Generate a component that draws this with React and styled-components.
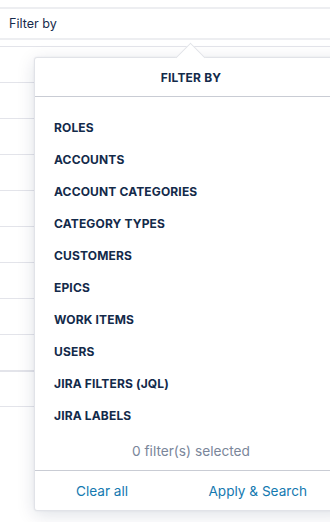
import React from "react";
import styled, { createGlobalStyle } from "styled-components";

const GlobalStyle = createGlobalStyle`
  html, body {
    margin: 0;
    padding: 0;
    background: #fff;
    font-family: Inter, "Noto Sans", "Liberation Sans", sans-serif;
    color: #172b4d;
  }
`;

const Page = styled.div`
  position: relative;
  width: 330px;
  height: 522px;
  overflow: hidden;
`;

const TopStrip = styled.div`
  height: 7px;
  border-bottom: 2px solid #edeef1;
`;

const FilterBar = styled.div`
  height: 29px;
  display: flex;
  align-items: center;
  padding-left: 9px;
  font-size: 12.6px;
  color: #172b4d;
  border-bottom: 2px solid #edeef1;
`;

const Table = styled.div`
  margin-top: 6px;
`;

const TableRow = styled.div`
  height: 35px;
  border-top: ${({ $thick }) => ($thick ? "2px" : "1px")} solid #e3e4ea;
  box-sizing: border-box;
  height: 36px;
`;

const Popover = styled.div`
  position: absolute;
  left: 34px;
  top: 57px;
  width: 312px;
  height: 452px;
  background: #fff;
  border: 1px solid #e1e3e8;
  border-radius: 3px;
  box-shadow: 0 4px 18px rgba(9, 30, 66, 0.13), 0 0 2px rgba(9, 30, 66, 0.08);
  display: flex;
  flex-direction: column;
`;

const Arrow = styled.div`
  position: absolute;
  left: 145px;
  top: -11px;
  width: 20px;
  height: 20px;
  background: #fff;
  border-top: 1px solid #e1e3e8;
  border-left: 1px solid #e1e3e8;
  transform: rotate(45deg);
`;

const Header = styled.div`
  position: relative;
  height: 38px;
  display: flex;
  align-items: center;
  justify-content: center;
  font-size: 12px;
  font-weight: 700;
  letter-spacing: 0.2px;
  color: #132a4a;
  border-bottom: 1px solid #c9ccd4;
`;

const List = styled.div`
  padding: 14px 0 0 19px;
  display: flex;
  flex-direction: column;
`;

const Item = styled.div`
  height: 32px;
  display: flex;
  align-items: center;
  font-size: 12px;
  font-weight: 700;
  letter-spacing: 0.15px;
  color: #132a4a;
  text-transform: uppercase;
`;

const Count = styled.div`
  height: 39px;
  display: flex;
  align-items: center;
  justify-content: center;
  font-size: 13.7px;
  color: #7a869a;
  border-bottom: 1px solid #c9ccd4;
`;

const Footer = styled.div`
  flex: 1;
  display: flex;
  align-items: center;
  justify-content: space-between;
  padding: 0 40px 0 41px;
`;

const LinkButton = styled.button`
  border: 0;
  background: none;
  padding: 0;
  font-family: inherit;
  font-size: 13.6px;
  color: #1479b0;
  cursor: pointer;
`;

const filters = [
  "Roles",
  "Accounts",
  "Account categories",
  "Category types",
  "Customers",
  "Epics",
  "Work items",
  "Users",
  "Jira filters (JQL)",
  "Jira labels",
];

export default function App() {
  return (
    <>
      <GlobalStyle />
      <Page>
        <TopStrip />
        <FilterBar>Filter by</FilterBar>
        <Table>
          {Array.from({ length: 11 }).map((_, i) => (
            <TableRow key={i} $thick={i === 9} />
          ))}
        </Table>
        <Popover>
          <Header>
            <Arrow />
            FILTER BY
          </Header>
          <List>
            {filters.map((f) => (
              <Item key={f}>{f}</Item>
            ))}
          </List>
          <Count>0 filter(s) selected</Count>
          <Footer>
            <LinkButton>Clear all</LinkButton>
            <LinkButton>Apply &amp; Search</LinkButton>
          </Footer>
        </Popover>
      </Page>
    </>
  );
}
